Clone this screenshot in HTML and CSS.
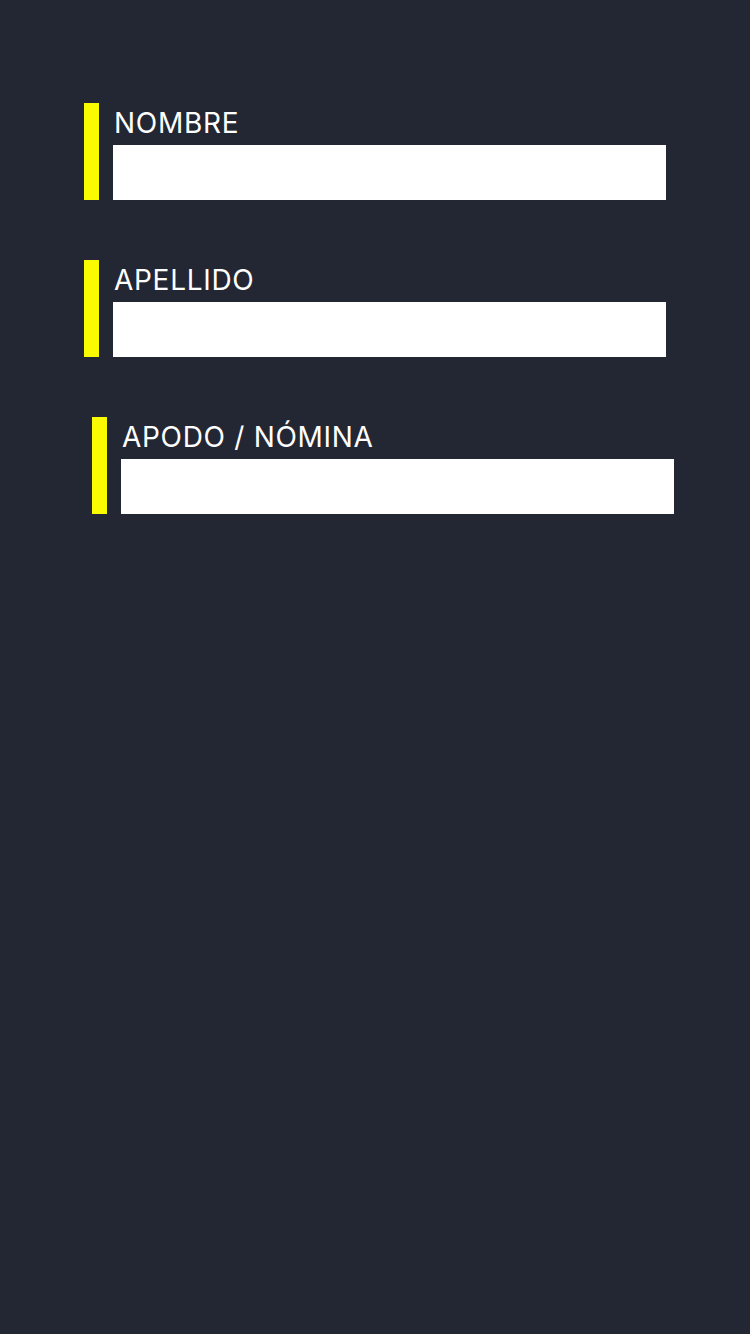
FILE: index.html
```html
<!DOCTYPE html>
<html lang="es">
<head>
<meta charset="utf-8">
<link rel="stylesheet" href="styles.css">
</head>
<body>
<main class="form">
  <div class="field">
    <div class="bar"></div>
    <div class="body">
      <label class="label">NOMBRE</label>
      <div class="input"></div>
    </div>
  </div>
  <div class="field">
    <div class="bar"></div>
    <div class="body">
      <label class="label">APELLIDO</label>
      <div class="input"></div>
    </div>
  </div>
  <div class="field field-shift">
    <div class="bar"></div>
    <div class="body">
      <label class="label">APODO / NÓMINA</label>
      <div class="input"></div>
    </div>
  </div>
</main>
</body>
</html>
```
FILE: styles.css
```css
html, body {
  margin: 0;
  padding: 0;
  background: #232733;
}
body {
  width: 750px;
  height: 1334px;
  font-family: Inter, "Noto Sans", sans-serif;
}
.form {
  display: flex;
  flex-direction: column;
  gap: 60px;
  padding: 103px 0 0 84px;
}
.field {
  display: flex;
  gap: 14px;
  height: 97px;
}
.field-shift {
  margin-left: 8px;
}
.bar {
  width: 15px;
  background: #fafa00;
}
.body {
  width: 553px;
  display: flex;
  flex-direction: column;
}
.label {
  display: block;
  height: 42px;
  padding-top: 2px;
  line-height: 36px;
  font-size: 28px;
  letter-spacing: 0.7px;
  color: #ffffff;
  padding-left: 1px;
  box-sizing: border-box;
}
.input {
  height: 55px;
  background: #ffffff;
}
```
